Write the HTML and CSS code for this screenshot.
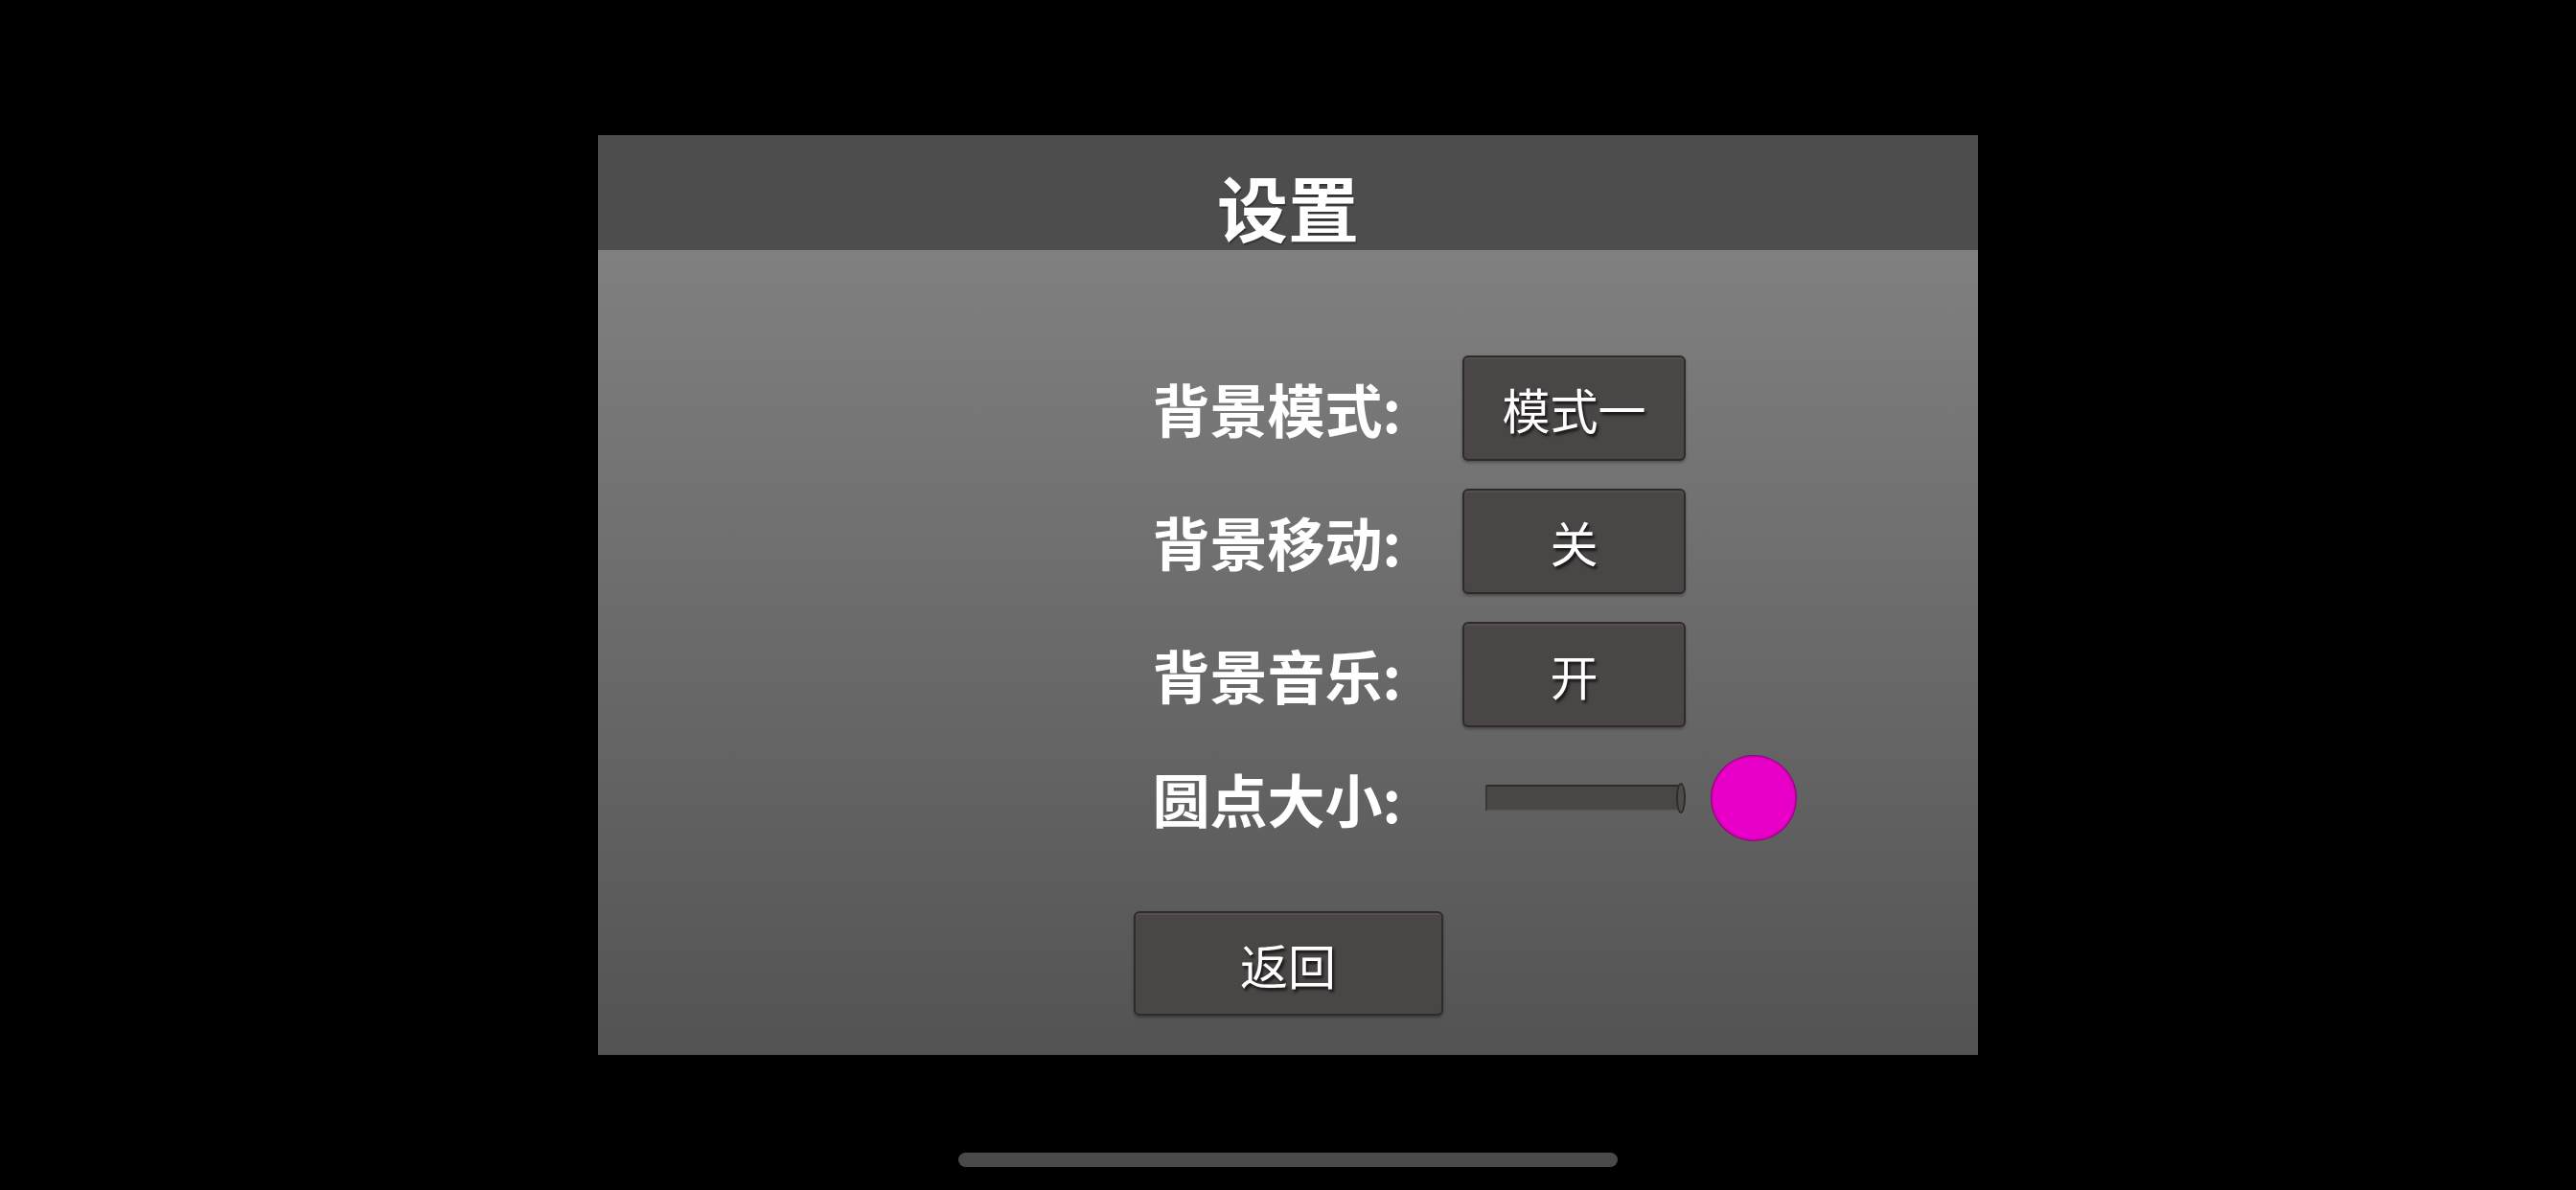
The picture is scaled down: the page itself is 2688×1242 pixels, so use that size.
FILE: index.html
```html
<!DOCTYPE html>
<html lang="zh-CN">
<head>
  <meta charset="UTF-8">
  <meta name="viewport" content="width=device-width, initial-scale=1.0">
  <title>设置</title>
  <link rel="stylesheet" href="styles.css">
</head>
<body>
  <div class="panel">
    <header class="panel-head">
      <h1>设置</h1>
    </header>

    <div class="panel-body">
      <div class="settings">
        <label class="name">背景模式:</label>
        <div class="control"><button class="btn">模式一</button></div>

        <label class="name">背景移动:</label>
        <div class="control"><button class="btn">关</button></div>

        <label class="name">背景音乐:</label>
        <div class="control"><button class="btn">开</button></div>

        <label class="name name-short">圆点大小:</label>
        <div class="control control-short">
          <div class="slider">
            <div class="slider-fill"></div>
            <div class="slider-knob"></div>
          </div>
          <div class="dot"></div>
        </div>
      </div>

      <button class="btn btn-back">返回</button>
    </div>
  </div>

  <div class="home-bar"></div>
</body>
</html>
```

FILE: styles.css
```css
body {
  margin: 0;
  background: #000;
  font-family: "Noto Sans CJK SC", "Noto Sans", sans-serif;
  color: #fff;
  height: 1242px;
  overflow: hidden;
}
.panel {
  width: 1440px;
  height: 960px;
  margin: 141px auto 0;
  display: flex;
  flex-direction: column;
}
.panel-head {
  height: 120px;
  background: #4d4d4d;
  text-align: center;
}
.panel-head h1 {
  margin: 0;
  font-size: 74px;
  font-weight: bold;
  line-height: 120px;
  padding-top: 14px;
  height: 106px;
  text-shadow: 1px 2px 1px rgba(0, 0, 0, 0.35);
}
.panel-body {
  flex: 1;
  background: linear-gradient(#808080, #535353);
  display: flex;
  flex-direction: column;
  align-items: center;
  padding-top: 110px;
  box-sizing: border-box;
}
.settings {
  display: grid;
  grid-template-columns: 838px 538px;
  column-gap: 64px;
  row-gap: 29px;
  width: 100%;
}
.name {
  text-align: right;
  font-size: 60px;
  font-weight: bold;
  line-height: 110px;
  height: 110px;
}
.name-short {
  line-height: 90px;
  height: 90px;
}
.control {
  display: flex;
  align-items: center;
  height: 110px;
}
.control-short {
  height: 90px;
  gap: 26px;
}
.btn {
  width: 233px;
  height: 110px;
  box-sizing: border-box;
  background: #4b4646;
  border: 2px solid #2f2b2b;
  border-radius: 6px;
  box-shadow: inset 0 2px 0 rgba(255, 255, 255, 0.06), 0 2px 3px rgba(0, 0, 0, 0.3);
  color: #fff;
  font-family: inherit;
  font-size: 50px;
  padding: 0;
  text-shadow: 2px 3px 3px rgba(0, 0, 0, 0.7);
}
.btn-back {
  width: 323px;
  height: 109px;
  margin-top: 73px;
}
.slider {
  margin-left: 24px;
  width: 209px;
  height: 32px;
  display: flex;
  align-items: center;
}
.slider-fill {
  flex: 1;
  height: 28px;
  box-sizing: border-box;
  background: #4b4646;
  border: 2px solid #3a3636;
  border-top-color: #2e2a2a;
  border-bottom-color: #5e5a5a;
  border-radius: 2px 0 0 2px;
  margin-right: -6px;
}
.slider-knob {
  width: 10px;
  height: 32px;
  box-sizing: border-box;
  background: #504b4b;
  border: 2px solid #2f2b2b;
  border-radius: 50%;
}
.dot {
  width: 90px;
  height: 90px;
  border-radius: 50%;
  background: #e800c8;
  box-shadow: inset 0 0 2px 1px rgba(60, 20, 50, 0.7);
}
.home-bar {
  width: 688px;
  height: 15px;
  margin: 102px auto 0;
  border-radius: 8px;
  background: #4a4a4a;
}
```
